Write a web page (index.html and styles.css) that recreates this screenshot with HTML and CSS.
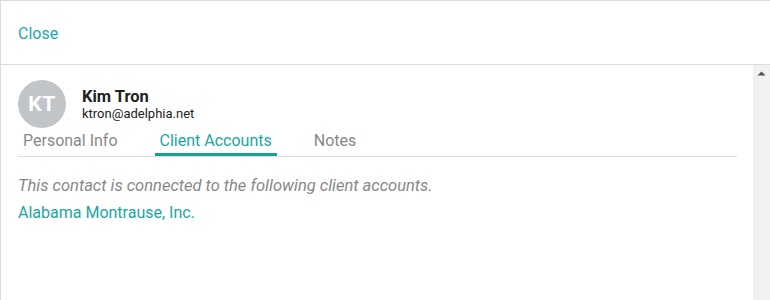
FILE: index.html
```html
<!DOCTYPE html>
<html>
<head>
<meta charset="utf-8">
<link rel="stylesheet" href="styles.css">
</head>
<body>
<div class="panel">
  <header class="header">
    <a class="close">Close</a>
  </header>
  <div class="body">
    <div class="content">
      <div class="contact">
        <div class="avatar">KT</div>
        <div class="who">
          <div class="name">Kim Tron</div>
          <div class="email">ktron@adelphia.net</div>
        </div>
      </div>
      <nav class="tabs">
        <span class="tab">Personal Info</span>
        <span class="tab active">Client Accounts</span>
        <span class="tab">Notes</span>
      </nav>
      <p class="note">This contact is connected to the following client accounts.</p>
      <a class="account">Alabama Montrause, Inc.</a>
    </div>
    <div class="scrollbar">
      <svg class="arrow" width="17" height="17" viewBox="0 0 17 17"><path d="M4.5 10.5 L8.5 6.5 L12.5 10.5 Z" fill="#505050"/></svg>
    </div>
  </div>
</div>
</body>
</html>
```
FILE: styles.css
```css
html, body {
  margin: 0;
  padding: 0;
  background: #fff;
}
body {
  font-family: Roboto, "Liberation Sans", sans-serif;
  width: 770px;
  height: 300px;
  overflow: hidden;
}
.panel {
  box-sizing: border-box;
  height: 300px;
  border-left: 1px solid #dcdcdc;
  border-top: 1px solid #dcdcdc;
  display: flex;
  flex-direction: column;
}
.header {
  height: 63px;
  border-bottom: 1px solid #dcdcdc;
  display: flex;
  align-items: center;
  padding-left: 17px;
}
.close {
  font-size: 16px;
  color: #1aa9ad;
  margin-top: 1px;
}
.body {
  flex: 1;
  display: flex;
  min-height: 0;
}
.content {
  flex: 1;
  padding: 15px 16px 0 17px;
}
.scrollbar {
  width: 17px;
  background: #f1f1f1;
}
.arrow {
  display: block;
}
.contact {
  display: flex;
  align-items: flex-start;
}
.avatar {
  width: 48px;
  height: 48px;
  border-radius: 50%;
  background: #c1c5c8;
  color: #fff;
  font-weight: 700;
  font-size: 21px;
  display: flex;
  align-items: center;
  justify-content: center;
  letter-spacing: 0.5px;
}
.who {
  margin-left: 16px;
  padding-top: 7px;
}
.name {
  font-weight: 700;
  font-size: 16.5px;
  color: #222;
  line-height: 19px;
}
.email {
  font-size: 13px;
  color: #222;
  line-height: 15px;
}
.tabs {
  display: flex;
  gap: 32px;
  border-bottom: 1px solid #dcdcdc;
  margin-top: 1px;
}
.tab {
  font-size: 16px;
  color: #888;
  padding: 0 5px;
  line-height: 24px;
  border-bottom: 3px solid transparent;
}
.tab.active {
  color: #1aa6a4;
  border-bottom-color: #15a394;
}
.note {
  margin: 19px 0 0;
  font-style: italic;
  font-size: 16.5px;
  color: #888;
  line-height: 20px;
}
.account {
  display: block;
  margin-top: 7px;
  font-size: 16px;
  color: #1aa6a4;
  line-height: 20px;
}
```
